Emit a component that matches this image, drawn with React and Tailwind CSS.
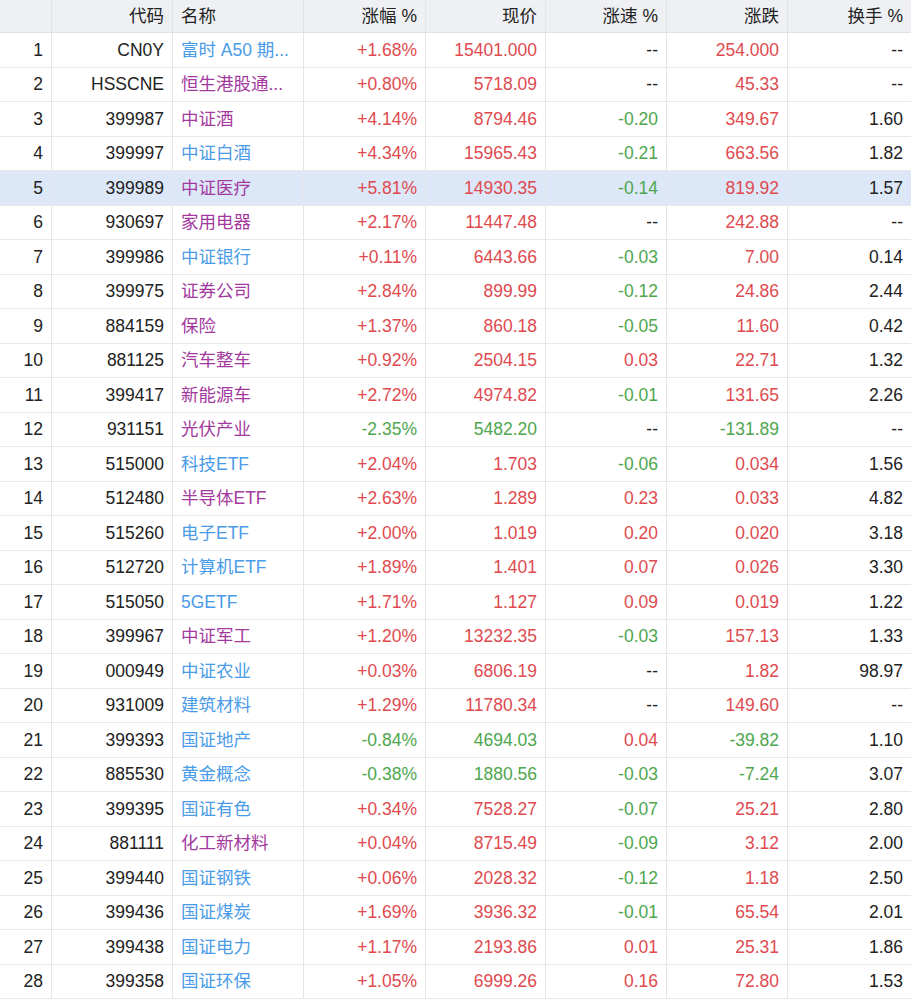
const R = '#e04a4f', G = '#4ea64e', B = '#4a9be8', P = '#a3399e';
const rows = [
  ['CN0Y','富时 A50 期...',B,'+1.68%','15401.000','--','254.000','--'],
  ['HSSCNE','恒生港股通...',P,'+0.80%','5718.09','--','45.33','--'],
  ['399987','中证酒',P,'+4.14%','8794.46','-0.20','349.67','1.60'],
  ['399997','中证白酒',B,'+4.34%','15965.43','-0.21','663.56','1.82'],
  ['399989','中证医疗',P,'+5.81%','14930.35','-0.14','819.92','1.57'],
  ['930697','家用电器',P,'+2.17%','11447.48','--','242.88','--'],
  ['399986','中证银行',B,'+0.11%','6443.66','-0.03','7.00','0.14'],
  ['399975','证券公司',P,'+2.84%','899.99','-0.12','24.86','2.44'],
  ['884159','保险',P,'+1.37%','860.18','-0.05','11.60','0.42'],
  ['881125','汽车整车',P,'+0.92%','2504.15','0.03','22.71','1.32'],
  ['399417','新能源车',P,'+2.72%','4974.82','-0.01','131.65','2.26'],
  ['931151','光伏产业',P,'-2.35%','5482.20','--','-131.89','--'],
  ['515000','科技ETF',B,'+2.04%','1.703','-0.06','0.034','1.56'],
  ['512480','半导体ETF',P,'+2.63%','1.289','0.23','0.033','4.82'],
  ['515260','电子ETF',B,'+2.00%','1.019','0.20','0.020','3.18'],
  ['512720','计算机ETF',B,'+1.89%','1.401','0.07','0.026','3.30'],
  ['515050','5GETF',B,'+1.71%','1.127','0.09','0.019','1.22'],
  ['399967','中证军工',P,'+1.20%','13232.35','-0.03','157.13','1.33'],
  ['000949','中证农业',B,'+0.03%','6806.19','--','1.82','98.97'],
  ['931009','建筑材料',B,'+1.29%','11780.34','--','149.60','--'],
  ['399393','国证地产',B,'-0.84%','4694.03','0.04','-39.82','1.10'],
  ['885530','黄金概念',B,'-0.38%','1880.56','-0.03','-7.24','3.07'],
  ['399395','国证有色',B,'+0.34%','7528.27','-0.07','25.21','2.80'],
  ['881111','化工新材料',P,'+0.04%','8715.49','-0.09','3.12','2.00'],
  ['399440','国证钢铁',B,'+0.06%','2028.32','-0.12','1.18','2.50'],
  ['399436','国证煤炭',B,'+1.69%','3936.32','-0.01','65.54','2.01'],
  ['399438','国证电力',B,'+1.17%','2193.86','0.01','25.31','1.86'],
  ['399358','国证环保',B,'+1.05%','6999.26','0.16','72.80','1.53'],
];
const col = v => v === '--' ? '#222' : v.startsWith('-') ? G : R;
const cell = 'border-r border-[#e3e5e8] flex items-center px-2';
const grid = 'grid grid-cols-[52px_121px_131px_122px_120px_121px_121px_123px]';

export default function App() {
  return (
    <div className="w-[911px] bg-white text-[17.5px] text-[#222]" style={{ fontFamily: '"Liberation Sans","Noto Sans CJK SC",sans-serif' }}>
      <div className={`${grid} h-[33px] bg-[#eef0f4] border-b border-[#dfe1e5]`}>
        <div className={cell}></div>
        <div className={`${cell} justify-end`}>代码</div>
        <div className={cell}>名称</div>
        <div className={`${cell} justify-end`}>涨幅 %</div>
        <div className={`${cell} justify-end`}>现价</div>
        <div className={`${cell} justify-end`}>涨速 %</div>
        <div className={`${cell} justify-end`}>涨跌</div>
        <div className={`${cell} justify-end border-r-0`}>换手 %</div>
      </div>
      {rows.map((r, i) => (
        <div key={i} className={`${grid} h-[34.5px] border-b border-[#e6e8eb] ${i === 4 ? 'bg-[#dce7f8]' : ''}`}>
          <div className={`${cell} justify-end`}>{i + 1}</div>
          <div className={`${cell} justify-end`}>{r[0]}</div>
          <div className={cell} style={{ color: r[2] }}>{r[1]}</div>
          <div className={`${cell} justify-end`} style={{ color: col(r[3]) }}>{r[3]}</div>
          <div className={`${cell} justify-end`} style={{ color: col(r[3]) }}>{r[4]}</div>
          <div className={`${cell} justify-end`} style={{ color: col(r[5]) }}>{r[5]}</div>
          <div className={`${cell} justify-end`} style={{ color: col(r[6]) }}>{r[6]}</div>
          <div className={`${cell} justify-end border-r-0`}>{r[7]}</div>
        </div>
      ))}
    </div>
  );
}
